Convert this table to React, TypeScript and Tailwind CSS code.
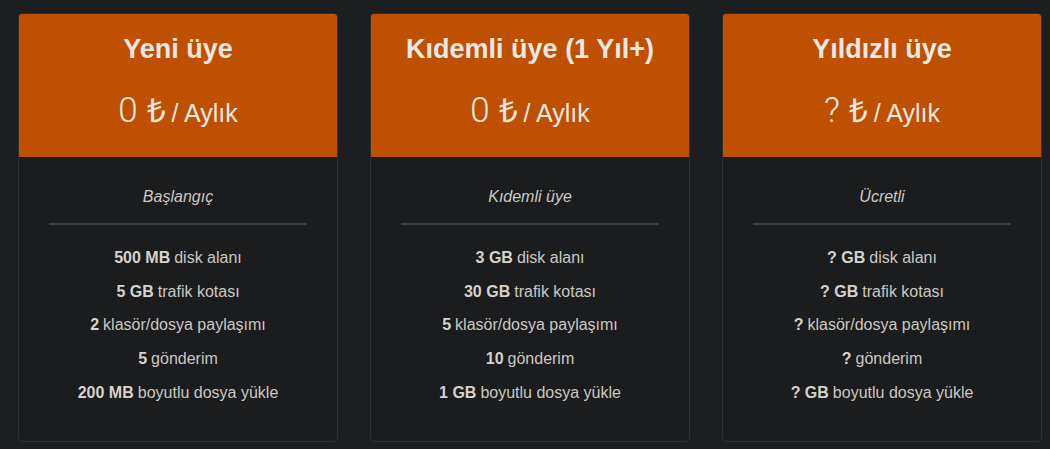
import React from 'react';

type Feature = { bold: string; rest: string };
type Plan = { title: string; price: string; tag: string; features: Feature[] };

const plans: Plan[] = [
  {
    title: 'Yeni üye',
    price: '0',
    tag: 'Başlangıç',
    features: [
      { bold: '500 MB', rest: 'disk alanı' },
      { bold: '5 GB', rest: 'trafik kotası' },
      { bold: '2', rest: 'klasör/dosya paylaşımı' },
      { bold: '5', rest: 'gönderim' },
      { bold: '200 MB', rest: 'boyutlu dosya yükle' },
    ],
  },
  {
    title: 'Kıdemli üye (1 Yıl+)',
    price: '0',
    tag: 'Kıdemli üye',
    features: [
      { bold: '3 GB', rest: 'disk alanı' },
      { bold: '30 GB', rest: 'trafik kotası' },
      { bold: '5', rest: 'klasör/dosya paylaşımı' },
      { bold: '10', rest: 'gönderim' },
      { bold: '1 GB', rest: 'boyutlu dosya yükle' },
    ],
  },
  {
    title: 'Yıldızlı üye',
    price: '?',
    tag: 'Ücretli',
    features: [
      { bold: '? GB', rest: 'disk alanı' },
      { bold: '? GB', rest: 'trafik kotası' },
      { bold: '?', rest: 'klasör/dosya paylaşımı' },
      { bold: '?', rest: 'gönderim' },
      { bold: '? GB', rest: 'boyutlu dosya yükle' },
    ],
  },
];

const PlanCard = ({ plan }: { plan: Plan }) => (
  <div className="w-[320px] rounded-[4px] overflow-hidden border border-[#2d3032] bg-[#1a1c1e]">
    {/* Header */}
    <div className="h-[144px] bg-[#bf5000] text-[#ebe8e4] flex flex-col items-center pt-[21px] -mx-px -mt-px">
      <h3 className="text-[27px] leading-[31px] font-bold">{plan.title}</h3>
      <div className="mt-[26px] flex items-baseline leading-[40px]">
        <span className="text-[35px] font-light font-['Roboto',sans-serif]">{plan.price}</span>
        <span className="text-[33px] ml-[9px]">₺</span>
        <span className="text-[25px] ml-[6px]">/ Aylık</span>
      </div>
    </div>

    {/* Body */}
    <div className="pt-[28px] pb-[31px] text-[#cdc8c2] text-[16px]">
      <p className="text-center italic leading-[24px]">{plan.tag}</p>
      <div className="mx-[30px] mt-[14px] h-[2px] bg-[#3b3f41]" />
      <ul className="mt-[16px]">
        {plan.features.map((f, i) => (
          <li key={i} className="h-[33.8px] flex items-center justify-center">
            <b className="font-bold text-[#d6d2cc]">{f.bold}</b>
            <span className="ml-[4px]">{f.rest}</span>
          </li>
        ))}
      </ul>
    </div>
  </div>
);

export default function App() {
  return (
    <div className="min-h-[449px] w-[1050px] bg-[#1c1f20] font-['Liberation_Sans',Arial,sans-serif] pt-[13px] pl-[18px]">
      <div className="flex gap-[32px]">
        {plans.map((p) => (
          <PlanCard key={p.title} plan={p} />
        ))}
      </div>
    </div>
  );
}
